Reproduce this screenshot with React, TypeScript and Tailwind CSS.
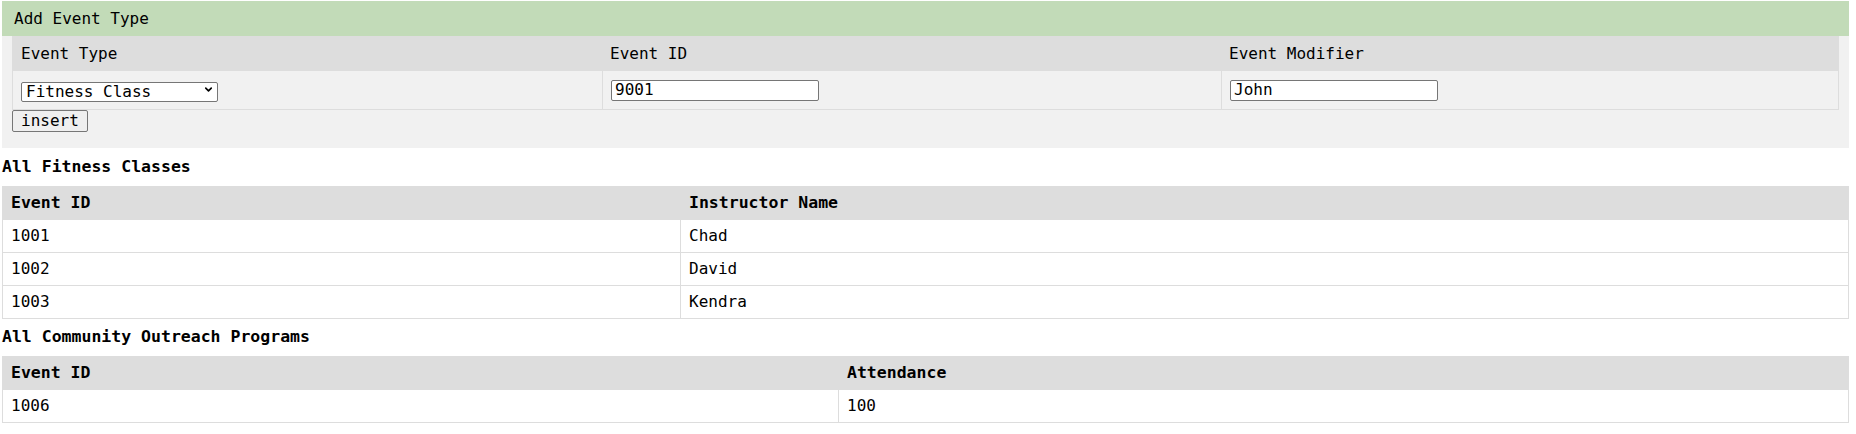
import { ChevronDown } from 'lucide-react';

interface Column {
  label: string;
}

interface DataTableProps {
  title: string;
  columns: Column[];
  rows: string[][];
  gridClass: string;
  titleClass: string;
}

const fontClass = "font-['DejaVu_Sans_Mono','Liberation_Mono',monospace] text-[16px] text-black";

const DataTable = ({ title, rows, columns, gridClass, titleClass }: DataTableProps) => {
  return (
    <div>
      <div className={`${titleClass} flex items-center font-bold text-[16.5px]`}>{title}</div>
      <div className="w-[1847px]">
        <div className={`grid ${gridClass} h-[34px] items-center bg-[#dddddd] font-bold text-[16.5px]`}>
          {columns.map((col) => (
            <div key={col.label} className="pl-[9px]">
              {col.label}
            </div>
          ))}
        </div>
        {rows.map((row) => (
          <div key={row[0]} className={`grid ${gridClass} h-[33px] border-b border-[#dddddd] bg-white`}>
            {row.map((cell, i) => (
              <div
                key={i}
                className={`flex items-center pl-[8px] border-l border-[#dddddd] ${
                  i === row.length - 1 ? 'border-r' : ''
                }`}
              >
                {cell}
              </div>
            ))}
          </div>
        ))}
      </div>
    </div>
  );
};

const App = () => {
  return (
    <div className={`${fontClass} pt-px pl-[2px]`}>
      {/* Add form */}
      <div className="w-[1847px]">
        <div className="h-[35px] flex items-center pl-[12px] bg-[#c2dbb8]">Add Event Type</div>
        <div className="bg-[#f1f1f1] px-[10px] pb-[16px]">
          <div className="grid grid-cols-[590px_619px_618px] h-[35px] items-center bg-[#dddddd]">
            <div className="pl-[9px]">Event Type</div>
            <div className="pl-[8px]">Event ID</div>
            <div className="pl-[8px]">Event Modifier</div>
          </div>
          <div className="grid grid-cols-[590px_619px_618px] h-[39px] border-b border-[#dddddd]">
            <div className="flex items-center pl-[8px] border-l border-[#dddddd]">
              <div className="relative w-[197px] h-[20px]">
                <select
                  defaultValue="fitness"
                  className="appearance-none w-full h-full border border-[#767676] rounded-[2px] bg-white pl-[4px] leading-[18px]"
                >
                  <option value="fitness">Fitness Class</option>
                  <option value="outreach">Community Outreach</option>
                </select>
                <ChevronDown
                  className="absolute right-[4px] top-[4px] pointer-events-none"
                  size={11}
                  strokeWidth={3.5}
                />
              </div>
            </div>
            <div className="flex items-center pl-[8px] border-l border-[#dddddd]">
              <input
                defaultValue="9001"
                className="w-[208px] h-[21px] border border-[#767676] rounded-[2px] bg-white pl-[3px]"
              />
            </div>
            <div className="flex items-center pl-[8px] border-l border-r border-[#dddddd]">
              <input
                defaultValue="John"
                className="w-[208px] h-[21px] border border-[#767676] rounded-[2px] bg-white pl-[3px]"
              />
            </div>
          </div>
          <button className="block h-[22px] px-[8px] border border-[#767676] rounded-[2px] bg-[#efefef] leading-none">
            insert
          </button>
        </div>
      </div>

      <DataTable
        title="All Fitness Classes"
        titleClass="h-[38px]"
        gridClass="grid-cols-[678px_1169px]"
        columns={[{ label: 'Event ID' }, { label: 'Instructor Name' }]}
        rows={[
          ['1001', 'Chad'],
          ['1002', 'David'],
          ['1003', 'Kendra'],
        ]}
      />
      <DataTable
        title="All Community Outreach Programs"
        titleClass="h-[37px]"
        gridClass="grid-cols-[836px_1011px]"
        columns={[{ label: 'Event ID' }, { label: 'Attendance' }]}
        rows={[['1006', '100']]}
      />
    </div>
  );
};

export default App;
